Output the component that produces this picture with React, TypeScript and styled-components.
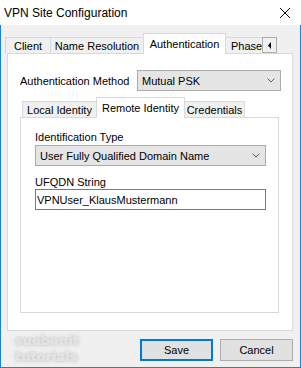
import React from "react";
import styled, { createGlobalStyle, css } from "styled-components";

const GlobalStyle = createGlobalStyle`
  html, body { margin: 0; padding: 0; background: #ffffff; }
  body {
    font-family: "Liberation Sans", Arial, sans-serif;
    font-size: 11px;
    color: #000000;
  }
  * { box-sizing: border-box; }
`;

const Window = styled.div`
  width: 301px;
  height: 368px;
  display: flex;
  flex-direction: column;
  overflow: hidden;
`;

const TitleBar = styled.div`
  height: 25px;
  flex: none;
  background: #ffffff;
  display: flex;
  align-items: center;
  justify-content: space-between;
  padding: 0 11px 0 4px;
  font-size: 12px;
`;

const Body = styled.div`
  flex: 1;
  display: flex;
  flex-direction: column;
  background: #f0f0f0;
  border: 1px solid #1883d7;
  border-top: none;
  padding: 8px 7px 0 6px;
`;

const TabStrip = styled.div<{ $offset: number; $gap?: number }>`
  display: flex;
  align-items: flex-end;
  height: 20px;
  flex: none;
  margin-left: ${(p) => p.$offset}px;
  margin-top: ${(p) => p.$gap ?? 0}px;
`;

const Tab = styled.div<{ $width: number; $active?: boolean; $clip?: boolean }>`
  width: ${(p) => p.$width}px;
  height: 16px;
  flex: none;
  margin-right: -1px;
  border: 1px solid #d9d9d9;
  border-bottom: none;
  background: #f0f0f0;
  display: flex;
  align-items: center;
  justify-content: center;
  white-space: nowrap;
  overflow: hidden;
  ${(p) =>
    p.$active &&
    css`
      height: 21px;
      margin-bottom: -1px;
      background: #ffffff;
      position: relative;
      z-index: 1;
    `}
  ${(p) =>
    p.$clip &&
    css`
      justify-content: flex-start;
      padding-left: 5px;
    `}
`;

const ScrollButton = styled.div`
  width: 15px;
  height: 16px;
  flex: none;
  border: 1px solid #adadad;
  background: #f0f0f0;
  display: flex;
  align-items: center;
  justify-content: center;
  position: relative;
  z-index: 2;
`;

const Panel = styled.div`
  height: 278px;
  flex: none;
  background: #ffffff;
  border: 1px solid #d9d9d9;
  padding: 16px 11px 0 12px;
  display: flex;
  flex-direction: column;
`;

const Row = styled.div`
  display: flex;
  align-items: center;
  height: 21px;
`;

const RowLabel = styled.div`
  width: 117px;
  flex: none;
`;

const Combo = styled.div<{ $width?: number; $gap?: number }>`
  width: ${(p) => (p.$width ? `${p.$width}px` : "100%")};
  height: 21px;
  flex: none;
  margin-top: ${(p) => p.$gap ?? 0}px;
  border: 1px solid #acacac;
  background: #e5e5e5;
  display: flex;
  align-items: center;
  justify-content: space-between;
  padding: 0 5px 0 4px;
  white-space: nowrap;
`;

const InnerPanel = styled.div`
  width: 259px;
  height: 196px;
  flex: none;
  background: #ffffff;
  border: 1px solid #d9d9d9;
  padding: 12px 12px 0 14px;
  display: flex;
  flex-direction: column;
`;

const FieldLabel = styled.div<{ $gap?: number }>`
  height: 14px;
  line-height: 14px;
  margin-top: ${(p) => p.$gap ?? 0}px;
`;

const TextInput = styled.input`
  width: 100%;
  height: 21px;
  border: 1px solid #7a7a7a;
  background: #ffffff;
  padding: 0 1px;
  margin: 0;
  font-family: "Liberation Sans", Arial, sans-serif;
  font-size: 11px;
  color: #000000;
  outline: none;
`;

const Footer = styled.div`
  flex: 1;
  display: flex;
  justify-content: space-between;
  align-items: flex-start;
`;

const Watermark = styled.div`
  margin: 2px 0 0 8px;
  font-family: "DejaVu Sans", Verdana, sans-serif;
  font-weight: bold;
  font-size: 13px;
  line-height: 16px;
  color: #e2e2e2;
  text-shadow: 0 0 1px rgba(255, 255, 255, 0.9), 0 0 3px rgba(0, 0, 0, 0.22),
    0 0 6px rgba(0, 0, 0, 0.12);
`;

const ButtonGroup = styled.div`
  margin-top: 8px;
  display: flex;
  gap: 7px;
`;

const Button = styled.button<{ $default?: boolean }>`
  width: 73px;
  height: 22px;
  margin: 0;
  padding: 0;
  background: #e1e1e1;
  border: 1px solid #adadad;
  font-family: "Liberation Sans", Arial, sans-serif;
  font-size: 11px;
  color: #000000;
  ${(p) =>
    p.$default &&
    css`
      border: 2px solid #0078d7;
    `}
`;

const Chevron = () => (
  <svg width="8" height="5" viewBox="0 0 8 5">
    <path d="M0.5 0.5 L4 4 L7.5 0.5" fill="none" stroke="#606060" strokeWidth="1" />
  </svg>
);

const CloseIcon = () => (
  <svg width="10" height="10" viewBox="0 0 10 10">
    <path d="M0 0 L10 10 M10 0 L0 10" stroke="#000000" strokeWidth="1" />
  </svg>
);

const LeftArrow = () => (
  <svg width="4" height="7" viewBox="0 0 4 7">
    <path d="M3 0 L3 7 L0 3.5 Z" fill="#000000" />
  </svg>
);

export default function App() {
  return (
    <>
      <GlobalStyle />
      <Window>
        <TitleBar>
          <span>VPN Site Configuration</span>
          <CloseIcon />
        </TitleBar>
        <Body>
          <TabStrip $offset={-2}>
            <Tab $width={46}>Client</Tab>
            <Tab $width={94}>Name Resolution</Tab>
            <Tab $width={83} $active>
              Authentication
            </Tab>
            <Tab $width={38} $clip>
              Phase
            </Tab>
            <ScrollButton>
              <LeftArrow />
            </ScrollButton>
          </TabStrip>
          <Panel>
            <Row>
              <RowLabel>Authentication Method</RowLabel>
              <Combo $width={144}>
                <span>Mutual PSK</span>
                <Chevron />
              </Combo>
            </Row>
            <TabStrip $offset={2} $gap={6}>
              <Tab $width={75}>Local Identity</Tab>
              <Tab $width={89} $active>
                Remote Identity
              </Tab>
              <Tab $width={61}>Credentials</Tab>
            </TabStrip>
            <InnerPanel>
              <FieldLabel>Identification Type</FieldLabel>
              <Combo $gap={1}>
                <span>User Fully Qualified Domain Name</span>
                <Chevron />
              </Combo>
              <FieldLabel $gap={9}>UFQDN String</FieldLabel>
              <TextInput readOnly value="VPNUser_KlausMustermann" />
            </InnerPanel>
          </Panel>
          <Footer>
            <Watermark>
              suebenit
              <br />
              tutorials
            </Watermark>
            <ButtonGroup>
              <Button $default>Save</Button>
              <Button>Cancel</Button>
            </ButtonGroup>
          </Footer>
        </Body>
      </Window>
    </>
  );
}
